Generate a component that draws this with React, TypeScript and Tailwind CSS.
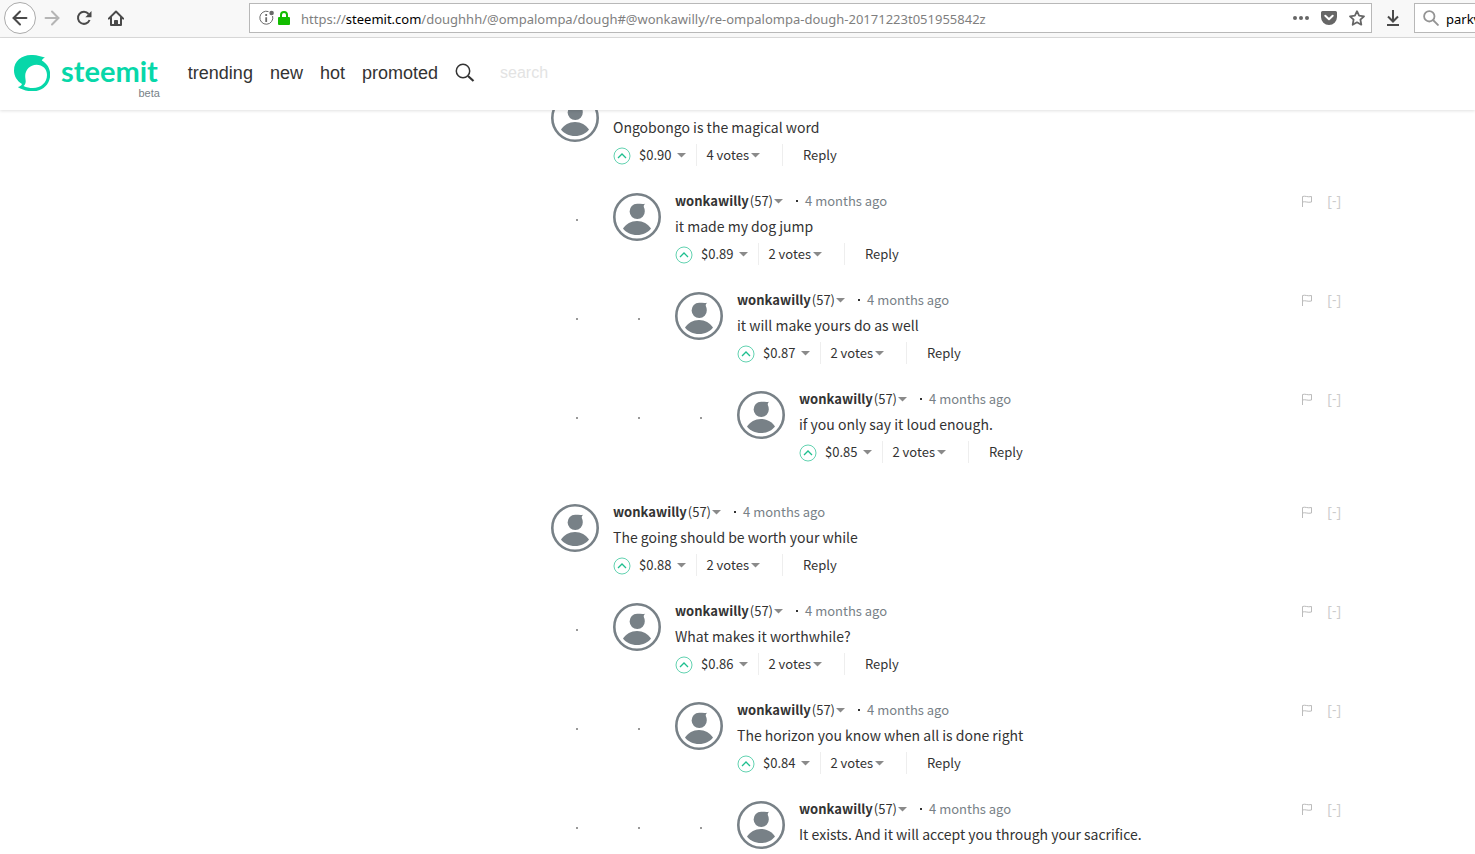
import * as React from "react";
import { ArrowLeft, ArrowRight } from "lucide-react";

type Comment = {
  id: number;
  depth: number;
  body: string;
  payout?: string;
  votes?: number;
  newThread?: boolean;
};

const comments: Comment[] = [
  { id: 1, depth: 0, body: "Ongobongo is the magical word", payout: "0.90", votes: 4 },
  { id: 2, depth: 1, body: "it made my dog jump", payout: "0.89", votes: 2 },
  { id: 3, depth: 2, body: "it will make yours do as well", payout: "0.87", votes: 2 },
  { id: 4, depth: 3, body: "if you only say it loud enough.", payout: "0.85", votes: 2 },
  { id: 5, depth: 0, body: "The going should be worth your while", payout: "0.88", votes: 2, newThread: true },
  { id: 6, depth: 1, body: "What makes it worthwhile?", payout: "0.86", votes: 2 },
  { id: 7, depth: 2, body: "The horizon you know when all is done right", payout: "0.84", votes: 2 },
  { id: 8, depth: 3, body: "It exists. And it will accept you through your sacrifice." },
];

const links = ["trending", "new", "hot", "promoted"];

function Caret() {
  return (
    <svg viewBox="0 0 9 5" className="h-[5px] w-[9px] shrink-0 fill-[#8a8a8a]" aria-hidden="true">
      <path d="M0 0h9L4.500 4.500z" />
    </svg>
  );
}

function BrowserBar() {
  return (
    <div className="flex h-[38px] shrink-0 items-center overflow-hidden border-b border-[#dcdcdc] bg-[#f8f8f8] pb-px pl-1 text-[#4a4a4a]">
      <button aria-label="Back" className="flex size-8 shrink-0 items-center justify-center rounded-full border border-[#ababab] bg-white">
        <ArrowLeft className="size-[22px]" strokeWidth={2.2} />
      </button>
      <button aria-label="Forward" className="ml-[5px] shrink-0 text-[#b5b5b5]">
        <ArrowRight className="size-[22px]" strokeWidth={2.2} />
      </button>
      <button aria-label="Reload" className="ml-[13px] shrink-0">
        <svg viewBox="0 0 16 16" className="size-4" fill="none" stroke="currentColor" strokeWidth="2">
          <path d="M12.600 4A6 6 0 1 0 13.600 10" />
          <path d="M15.500 1v6.200H9.300z" fill="currentColor" stroke="none" />
        </svg>
      </button>
      <button aria-label="Home" className="ml-4 shrink-0">
        <svg viewBox="0 0 16 16" className="size-4" fill="none" stroke="currentColor" strokeWidth="2">
          <path d="M.8 8.600 8 1.500l7.200 7.100M3 7.500V15h10V7.500" strokeLinejoin="round" strokeLinecap="round" />
          <path d="M6.500 15v-4.500h3V15z" fill="currentColor" strokeWidth="1" />
        </svg>
      </button>
      <div className="ml-[125px] flex h-[30px] min-w-0 flex-1 items-center border border-[#b8b8b8] bg-white pr-1.5 pl-[9px]">
        <svg viewBox="0 0 16 16" className="size-4 shrink-0" fill="none" stroke="#6a6a6a" aria-hidden="true">
          <path d="M9.500 1.600A6.500 6.500 0 1 0 13.600 6" />
          <path d="M7.200 4v2M7.200 7.200V12" strokeWidth="1.800" />
          <circle cx="12.600" cy="3" r="2.300" fill="#6a6a6a" stroke="none" />
        </svg>
        <svg viewBox="0 0 12 14" className="ml-[3px] h-3.5 w-3 shrink-0" aria-hidden="true">
          <path d="M3 7V4a3 3 0 0 1 6 0v3" fill="none" stroke="#12bc00" strokeWidth="2" />
          <rect y="6" width="12" height="8" rx="1" fill="#12bc00" />
        </svg>
        <p className="ml-[11px] min-w-0 flex-1 truncate pt-[3px] font-['Noto_Sans',sans-serif] text-[13px] text-[#7f7f7f]">
          https://<span className="text-black">steemit.com</span>/doughhh/@ompalompa/dough#@wonkawilly/re-ompalompa-dough-20171223t051955842z
        </p>
        <button aria-label="Page actions" className="shrink-0">
          <svg viewBox="0 0 16 16" className="size-4 fill-[#666]">
            <circle cx="2" cy="8" r="2" />
            <circle cx="8" cy="8" r="2" />
            <circle cx="14" cy="8" r="2" />
          </svg>
        </button>
        <button aria-label="Save to Pocket" className="ml-3 shrink-0">
          <svg viewBox="0 0 16 16" className="size-4">
            <path d="M1.500 1h13A1.500 1.500 0 0 1 16 2.500V7A8 8 0 0 1 0 7V2.500A1.500 1.500 0 0 1 1.500 1z" fill="#666" />
            <path d="m4.300 5.800 3.700 3.500 3.700-3.500" fill="none" stroke="#fff" strokeWidth="2" strokeLinecap="round" strokeLinejoin="round" />
          </svg>
        </button>
        <button aria-label="Bookmark" className="ml-3 shrink-0">
          <svg viewBox="0 0 16 16" className="size-4" fill="none" stroke="#666" strokeWidth="1.800" strokeLinejoin="round">
            <path d="m8 1.200 2.100 4.500 4.900.6-3.600 3.400.9 5L8 12.300l-4.300 2.400.9-5L1 6.300l4.900-.6z" />
          </svg>
        </button>
      </div>
      <button aria-label="Downloads" className="mx-[13px] shrink-0">
        <svg viewBox="0 0 16 16" className="size-4" fill="none" stroke="currentColor" strokeWidth="2">
          <path d="M8 0v11M3 6.500l5 5 5-5M2 15h12" />
        </svg>
      </button>
      <div className="flex h-[30px] w-[61px] shrink-0 items-center overflow-hidden border border-r-0 border-[#b8b8b8] bg-white pl-2">
        <svg viewBox="0 0 16 16" className="size-4 shrink-0" fill="none" stroke="#949494" strokeWidth="1.800" aria-hidden="true">
          <circle cx="6.300" cy="6.300" r="5.200" />
          <path d="m10 10 5.500 5.500" />
        </svg>
        <input
          aria-label="Web search"
          defaultValue="parkv"
          className="ml-[7px] w-40 shrink-0 pt-[3px] font-['Noto_Sans',sans-serif] text-[13px] text-black outline-none"
        />
      </div>
    </div>
  );
}

function SiteHeader() {
  return (
    <header className="relative z-10 flex h-[72px] shrink-0 items-center bg-white pb-0.5 pl-3.5 font-['Liberation_Sans',sans-serif] shadow-[0_1px_3px_rgba(0,0,0,0.12)]">
      <a href="#" className="flex items-center text-[#07d7a9]">
        <svg viewBox="0 0 36 36" className="size-9 shrink-0" fill="currentColor" aria-hidden="true">
          <path
            fillRule="evenodd"
            d="M17 0c5-.2 9.500 1.200 14 2.600-1.500.7-2.600 1.600-3.200 2.900C33 8.500 36.300 13.500 36.200 20 36 29.500 28.500 36.300 19 36.300c-6 0-10.500-1.300-15.300-4.300 2-.3 3.600-1.200 4.300-3C3 26 0 21 0 15.500 0 6 7.500.2 17 0zM22.500 9.800C16 9.800 11.200 15 11.200 21c0 2.500.6 4 .5 5.800-.1 1.800-.9 3.300-2.200 4.200 3 1.400 6 2.100 9.500 2.100 8 0 14-5.600 14-13.100 0-6-4.500-10.200-10.500-10.200z"
          />
        </svg>
        <div className="ml-[11px] flex flex-col items-end pt-2.5">
          <span className="font-['Lato',sans-serif] text-[29px] leading-7 font-bold">steemit</span>
          <span className="-mr-0.5 pt-0.5 text-[11px] leading-3 text-[#788187]">beta</span>
        </div>
      </a>
      <nav className="ml-[30px] flex gap-[17px] text-lg text-[#333]">
        {links.map((link) => (
          <a key={link} href="#">
            {link}
          </a>
        ))}
      </nav>
      <label htmlFor="search" className="ml-[17px]">
        <svg viewBox="0 0 20 20" className="size-5" fill="none" stroke="#333" aria-label="Search">
          <circle cx="8" cy="8" r="6.700" strokeWidth="1.500" />
          <path d="m13 13 5.500 5" strokeWidth="2.200" />
        </svg>
      </label>
      <input id="search" placeholder="search" className="ml-[25px] min-w-0 text-base outline-none placeholder:text-[#e3e3e3]" />
    </header>
  );
}

function Avatar() {
  return (
    <svg viewBox="0 0 48 48" className="mt-0.5 size-12 shrink-0 fill-[#788187]" aria-hidden="true">
      <circle cx="24" cy="24" r="22.700" fill="#fff" stroke="#788187" strokeWidth="2.600" />
      <path d="M32.200 10.800c-1.200.9-1.600 1.900-1.400 3.200.7 1.200 1 2.700 1 4.200a7.600 7.600 0 1 1-7.700-7.400c3 0 5.600.4 8.100 0z" />
      <path d="M10 35.500C13 31 18 28 24 28s11 3 14 7.500C35 39.500 30 42 24 42s-11-2.500-14-6.500z" />
    </svg>
  );
}

function CommentRow({ comment }: { comment: Comment }) {
  const [collapsed, setCollapsed] = React.useState(false);

  return (
    <li className={comment.newThread ? "flex pt-3.5" : "flex"}>
      {Array.from({ length: comment.depth }, (_, i) => (
        <span key={i} className="flex w-[62px] shrink-0 pt-7 pl-[25px]" aria-hidden="true">
          <span className="size-0.5 bg-[#999]" />
        </span>
      ))}
      <Avatar />
      <article className="ml-3.5 min-w-0 flex-1 pb-[25px]">
        <div className="flex h-5 items-center text-[13px] text-[#333]">
          <a href="#" className="flex items-center">
            <strong className="mr-px font-bold">wonkawilly</strong>
            <span className="mr-px">(57)</span>
            <Caret />
          </a>
          <span className="ml-[13px] size-0.5 bg-[#333]" />
          <a href="#" className="ml-[7px] text-[#788187]">
            4 months ago
          </a>
          <button aria-label="Flag" className="ml-auto">
            <svg viewBox="0 0 12 12" className="size-3" fill="none" stroke="#bbb">
              <path d="M1.500 12V1.500c3-1 5 1 9 0v5.500c-4 1-6-1-9 0" />
            </svg>
          </button>
          <button
            className="ml-3.5 font-['Open_Sans',sans-serif] text-sm leading-5 text-[#ccc]"
            onClick={() => setCollapsed(!collapsed)}
          >
            {collapsed ? "[+]" : "[-]"}
          </button>
        </div>
        <p className="pb-0.5 text-sm leading-[30px]">{comment.body}</p>
        {comment.payout && (
          <div className="flex h-[22px] items-center text-[13px]">
            <button aria-label="Upvote" className="mt-0.5">
              <svg viewBox="0 0 18 18" className="size-[18px]" fill="none" stroke="#1fbf8f">
                <circle cx="9" cy="9" r="8" strokeOpacity="0.700" />
                <path d="m5 11 4-4 4 4" strokeWidth="1.300" />
              </svg>
            </button>
            <button className="ml-2 flex items-center gap-1.5">
              <span>${comment.payout}</span>
              <Caret />
            </button>
            <button className="ml-2.5 flex h-[22px] items-center gap-0.5 border-l border-[#eee] pl-[9px]">
              <span>{comment.votes} votes</span>
              <Caret />
            </button>
            <a href="#" className="ml-[22px] flex h-[22px] items-center border-l border-[#eee] pl-5">
              Reply
            </a>
          </div>
        )}
      </article>
    </li>
  );
}

export default function App() {
  return (
    <div className="flex h-screen flex-col overflow-hidden bg-white">
      <BrowserBar />
      <SiteHeader />
      <main className="-mt-[18px] min-h-0 flex-1 overflow-hidden pr-[134px] pl-[551px] font-['Noto_Sans_CJK_SC',sans-serif] text-[#333]">
        <ul>
          {comments.map((comment) => (
            <CommentRow key={comment.id} comment={comment} />
          ))}
        </ul>
      </main>
    </div>
  );
}
